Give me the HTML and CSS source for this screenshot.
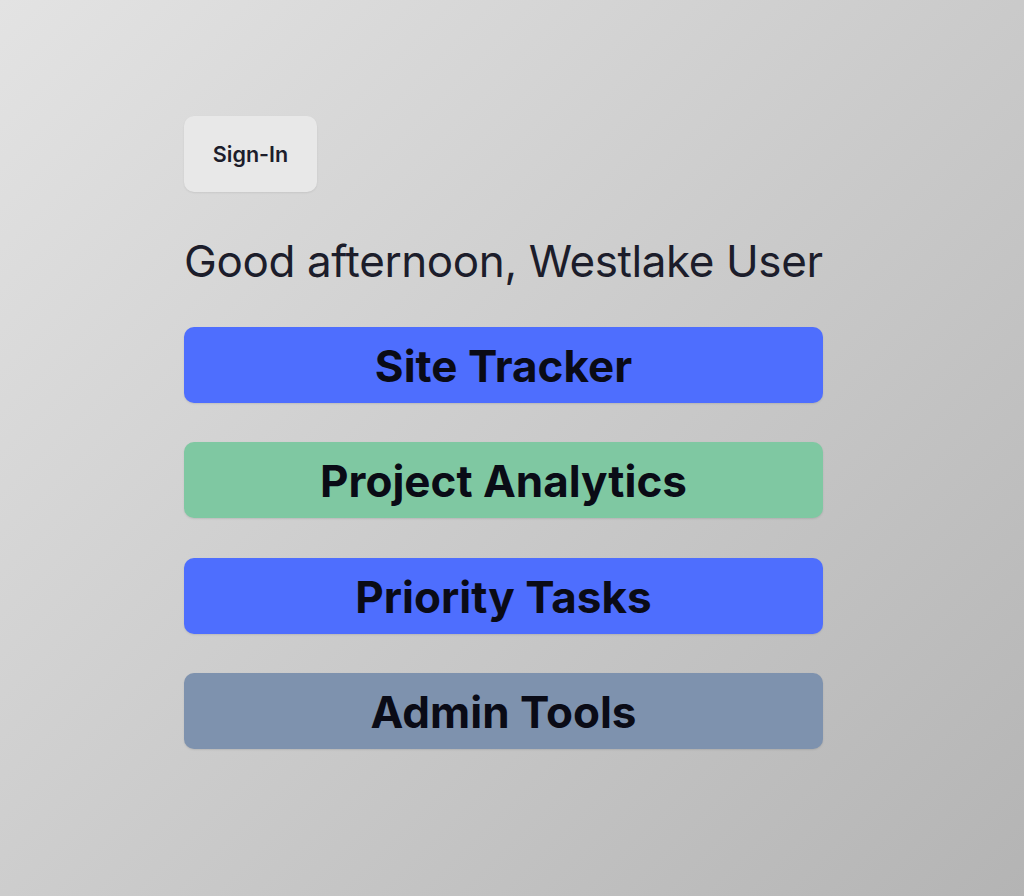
FILE: index.html
```html
<!DOCTYPE html>
<html lang="en">
<head>
<meta charset="utf-8">
<title>Home</title>
<link rel="stylesheet" href="styles.css">
</head>
<body>
<main class="page">
  <div class="column">
    <button class="signin">Sign-In</button>
    <h1 class="greeting">Good afternoon, Westlake User</h1>
    <nav class="menu">
      <a class="tile tile-blue" href="#">Site Tracker</a>
      <a class="tile tile-green" href="#">Project Analytics</a>
      <a class="tile tile-blue" href="#">Priority Tasks</a>
      <a class="tile tile-slate" href="#">Admin Tools</a>
    </nav>
  </div>
</main>
</body>
</html>
```

FILE: styles.css
```css
html, body {
  margin: 0;
  padding: 0;
}
body {
  min-height: 100vh;
  background: linear-gradient(135deg, #e3e3e3 0%, #b4b4b4 100%);
  font-family: Inter, "Noto Sans", sans-serif;
  color: #1c1d2b;
}
.page {
  padding: 116px 0 0 184px;
}
.column {
  width: 639px;
  display: flex;
  flex-direction: column;
  align-items: flex-start;
}
.signin {
  width: 133px;
  height: 76px;
  border: none;
  border-radius: 10px;
  background: #e8e8e8;
  box-shadow: 0 1px 2px rgba(0,0,0,0.08);
  font-family: Inter, "Noto Sans", sans-serif;
  font-size: 21.5px;
  font-weight: 600;
  color: #1c1d2b;
  padding: 0;
}
.greeting {
  margin: 43px 0 0 0;
  font-size: 44px;
  line-height: 53px;
  font-weight: 400;
  color: #1c1d2b;
  white-space: nowrap;
  letter-spacing: -0.4px;
}
.menu {
  align-self: stretch;
  margin-top: 39px;
  display: flex;
  flex-direction: column;
  gap: 39.3px;
}
.tile {
  display: block;
  height: 76px;
  line-height: 78px;
  border-radius: 10px;
  text-align: center;
  text-decoration: none;
  font-size: 44px;
  font-weight: 700;
  color: #0a0b16;
  box-shadow: 0 1px 2px rgba(0,0,0,0.1);
}
.tile-blue { background: #4e6efe; }
.tile-green { background: #7fc8a2; }
.tile-slate { background: #7e92ae; }
```
